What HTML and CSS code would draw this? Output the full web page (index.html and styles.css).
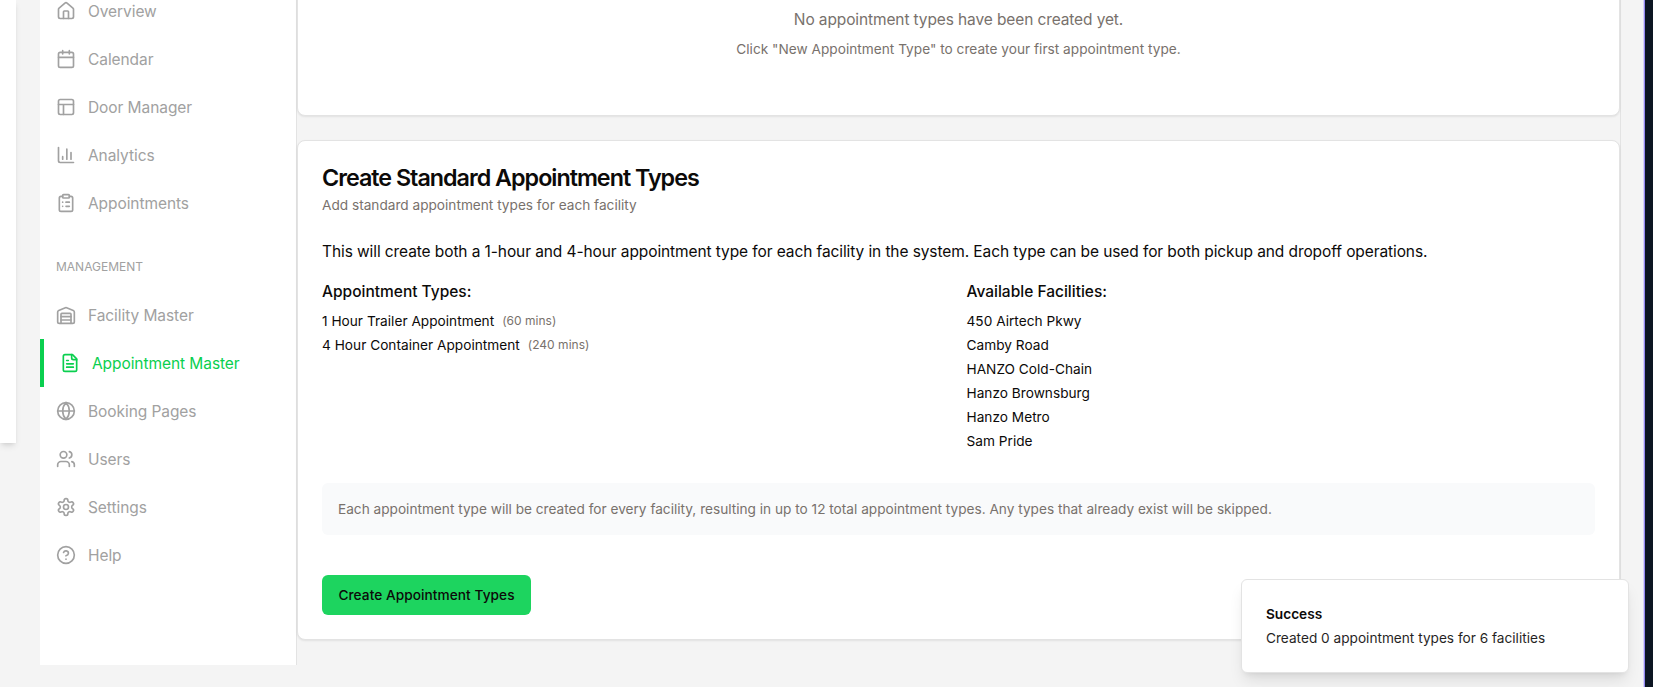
FILE: index.html
```html
<!DOCTYPE html>
<html lang="en">
<head>
<meta charset="utf-8">
<title>Appointment Master</title>
<link rel="stylesheet" href="styles.css">
</head>
<body>
<div class="app">
  <div class="edge-panel"></div>
  <div class="shell">
    <nav class="sidebar">
      <a class="item"><svg class="icon" viewBox="0 0 24 24"><path d="M15 21v-8a1 1 0 0 0-1-1h-4a1 1 0 0 0-1 1v8"/><path d="M3 10a2 2 0 0 1 .709-1.528l7-5.999a2 2 0 0 1 2.582 0l7 5.999A2 2 0 0 1 21 10v9a2 2 0 0 1-2 2H5a2 2 0 0 1-2-2z"/></svg><span>Overview</span></a>
      <a class="item"><svg class="icon" viewBox="0 0 24 24"><path d="M8 2v4M16 2v4M3 10h18"/><rect width="18" height="18" x="3" y="4" rx="2"/></svg><span>Calendar</span></a>
      <a class="item"><svg class="icon" viewBox="0 0 24 24"><rect width="18" height="18" x="3" y="3" rx="2"/><path d="M3 9h18M9 21V9"/></svg><span>Door Manager</span></a>
      <a class="item"><svg class="icon" viewBox="0 0 24 24"><path d="M3 3v16a2 2 0 0 0 2 2h16M18 17V9M13 17V5M8 17v-3"/></svg><span>Analytics</span></a>
      <a class="item"><svg class="icon" viewBox="0 0 24 24"><rect width="8" height="4" x="8" y="2" rx="1"/><path d="M16 4h2a2 2 0 0 1 2 2v14a2 2 0 0 1-2 2H6a2 2 0 0 1-2-2V6a2 2 0 0 1 2-2h2M12 11h4M12 16h4M8 11h.01M8 16h.01"/></svg><span>Appointments</span></a>
      <div class="group-label"><span>MANAGEMENT</span></div>
      <a class="item"><svg class="icon" viewBox="0 0 24 24"><path d="M22 8.35V20a2 2 0 0 1-2 2H4a2 2 0 0 1-2-2V8.35A2 2 0 0 1 3.26 6.5l8-3.2a2 2 0 0 1 1.48 0l8 3.2A2 2 0 0 1 22 8.35ZM6 18h12M6 14h12"/><path d="M6 22V11a1 1 0 0 1 1-1h10a1 1 0 0 1 1 1v11"/></svg><span>Facility Master</span></a>
      <a class="item active"><svg class="icon" viewBox="0 0 24 24"><path d="M15 2H6a2 2 0 0 0-2 2v16a2 2 0 0 0 2 2h12a2 2 0 0 0 2-2V7Z"/><path d="M14 2v4a2 2 0 0 0 2 2h4M10 9H8M16 13H8M16 17H8"/></svg><span>Appointment Master</span></a>
      <a class="item"><svg class="icon" viewBox="0 0 24 24"><circle cx="12" cy="12" r="10"/><path d="M12 2a14.5 14.5 0 0 0 0 20 14.5 14.5 0 0 0 0-20M2 12h20"/></svg><span>Booking Pages</span></a>
      <a class="item"><svg class="icon" viewBox="0 0 24 24"><path d="M16 21v-2a4 4 0 0 0-4-4H6a4 4 0 0 0-4 4v2"/><circle cx="9" cy="7" r="4"/><path d="M22 21v-2a4 4 0 0 0-3-3.87M16 3.13a4 4 0 0 1 0 7.75"/></svg><span>Users</span></a>
      <a class="item"><svg class="icon" viewBox="0 0 24 24"><path d="M12.22 2h-.44a2 2 0 0 0-2 2v.18a2 2 0 0 1-1 1.73l-.43.25a2 2 0 0 1-2 0l-.15-.08a2 2 0 0 0-2.73.73l-.22.38a2 2 0 0 0 .73 2.73l.15.1a2 2 0 0 1 1 1.72v.51a2 2 0 0 1-1 1.74l-.15.09a2 2 0 0 0-.73 2.73l.22.38a2 2 0 0 0 2.73.73l.15-.08a2 2 0 0 1 2 0l.43.25a2 2 0 0 1 1 1.73V20a2 2 0 0 0 2 2h.44a2 2 0 0 0 2-2v-.18a2 2 0 0 1 1-1.73l.43-.25a2 2 0 0 1 2 0l.15.08a2 2 0 0 0 2.73-.73l.22-.39a2 2 0 0 0-.73-2.73l-.15-.08a2 2 0 0 1-1-1.74v-.5a2 2 0 0 1 1-1.74l.15-.09a2 2 0 0 0 .73-2.73l-.22-.38a2 2 0 0 0-2.73-.73l-.15.08a2 2 0 0 1-2 0l-.43-.25a2 2 0 0 1-1-1.73V4a2 2 0 0 0-2-2z"/><circle cx="12" cy="12" r="3"/></svg><span>Settings</span></a>
      <a class="item"><svg class="icon" viewBox="0 0 24 24"><circle cx="12" cy="12" r="10"/><path d="M9.09 9a3 3 0 0 1 5.83 1c0 2-3 3-3 3M12 17h.01"/></svg><span>Help</span></a>
    </nav>
    <main class="main">
      <section class="card empty-card">
        <p class="empty-title"><span>No appointment types have been created yet.</span></p>
        <p class="empty-hint"><span>Click "New Appointment Type" to create your first appointment type.</span></p>
      </section>
      <section class="card">
        <h2 class="title"><span>Create Standard Appointment Types</span></h2>
        <p class="subtitle"><span>Add standard appointment types for each facility</span></p>
        <p class="intro"><span>This will create both a 1-hour and 4-hour appointment type for each facility in the system. Each type can be used for both pickup and dropoff operations.</span></p>
        <div class="columns">
          <div>
            <h3 class="heading"><span>Appointment Types:</span></h3>
            <ul class="list">
              <li><span>1 Hour Trailer Appointment</span><span class="mins">(60 mins)</span></li>
              <li><span>4 Hour Container Appointment</span><span class="mins">(240 mins)</span></li>
            </ul>
          </div>
          <div>
            <h3 class="heading"><span>Available Facilities:</span></h3>
            <ul class="list">
              <li><span>450 Airtech Pkwy</span></li>
              <li><span>Camby Road</span></li>
              <li><span>HANZO Cold-Chain</span></li>
              <li><span>Hanzo Brownsburg</span></li>
              <li><span>Hanzo Metro</span></li>
              <li><span>Sam Pride</span></li>
            </ul>
          </div>
        </div>
        <div class="note"><span>Each appointment type will be created for every facility, resulting in up to 12 total appointment types. Any types that already exist will be skipped.</span></div>
        <button class="button"><span>Create Appointment Types</span></button>
      </section>
    </main>
  </div>
  <div class="right-strip"></div>
</div>
<div class="toast">
  <div class="toast-title"><span>Success</span></div>
  <div class="toast-text"><span>Created 0 appointment types for 6 facilities</span></div>
</div>
</body>
</html>
```

FILE: styles.css
```css
* { box-sizing: border-box; margin: 0; padding: 0; }
body {
  height: 687px;
  overflow: hidden;
  background: #f4f4f4;
  color: #0c0a09;
  font-family: Inter, "Liberation Sans", sans-serif;
  font-size: 15.5px;
  line-height: 24px;
}
.app { display: flex; height: 687px; overflow: hidden; }
.edge-panel {
  width: 16px;
  height: 443px;
  background: #fff;
  box-shadow: 0 4px 6px -1px rgba(0, 0, 0, .1), 0 2px 4px -2px rgba(0, 0, 0, .1);
}
.shell {
  display: flex;
  width: 1581px;
  height: 665px;
  margin-left: 24px;
  border-right: 1px solid #e3e3e3;
}
.sidebar {
  display: flex;
  flex-direction: column;
  width: 256px;
  margin-top: -13px;
  background: #fff;
}
.item {
  display: flex;
  flex: none;
  align-items: center;
  gap: 12px;
  height: 48px;
  padding: 0 16px;
  color: #a1a1a1;
  letter-spacing: -.07px;
}
.item span { padding-top: 2px; }
.item.active { border-left: 4px solid #0acf4f; color: #0acf4f; }
.icon {
  width: 20px;
  height: 20px;
  fill: none;
  stroke: currentColor;
  stroke-width: 2;
  stroke-linecap: round;
  stroke-linejoin: round;
}
.group-label {
  height: 64px;
  padding: 32px 16px 0;
  color: #a1a1a1;
  font-size: 12px;
  line-height: 16px;
}
.main { width: 1324px; border-left: 1px solid #e3e3e3; }
.card {
  height: 500px;
  padding: 24px;
  background: #fff;
  border: 1px solid #e3e3e3;
  border-radius: 8px;
  box-shadow: 0 1px 2px rgba(0, 0, 0, .08);
}
.empty-card {
  height: 146px;
  margin-top: -30px;
  margin-bottom: 24px;
  padding-top: 37px;
  text-align: center;
  color: #78716c;
}
.empty-title { letter-spacing: -.115px; }
.empty-hint { margin-top: 7px; font-size: 13.65px; line-height: 20px; letter-spacing: .02px; }
.title { padding-top: 1px; font-size: 23.3px; line-height: 24px; font-weight: 600; letter-spacing: -1px; }
.subtitle { margin-top: 5px; font-size: 13.65px; line-height: 20px; color: #78716c; }
.intro { margin-top: 25px; letter-spacing: -.095px; }
.columns { display: grid; grid-template-columns: 1fr 1fr; gap: 16px; margin-top: 16px; }
.heading { font-size: 15.5px; font-weight: 500; margin-bottom: 7px; }
.list { display: flex; flex-direction: column; gap: 4px; list-style: none; font-size: 13.65px; line-height: 20px; letter-spacing: .02px; }
.list li { display: flex; gap: 8px; }
.mins { font-size: 12px; color: #78716c; }
.note {
  margin-top: 32px;
  padding: 16px;
  border-radius: 6px;
  background: #f9fafb;
  color: #78716c;
  font-size: 13.65px;
  line-height: 20px;
}
.button {
  display: block;
  width: 209px;
  height: 40px;
  margin-top: 40px;
  border: 0;
  border-radius: 6px;
  background: #1dd45f;
  color: #0c0a09;
  font: 500 13.65px/20px Inter, "Liberation Sans", sans-serif;
  letter-spacing: .07px;
}
.right-strip {
  width: 9px;
  margin-left: auto;
  border-left: 1px solid #9287f0;
  background: #0c1522;
  box-shadow: -1px 0 #d6d1f7;
}
.toast {
  position: absolute;
  left: 1241px;
  top: 579px;
  width: 388px;
  height: 94px;
  padding: 24px;
  background: #fff;
  border: 1px solid #e3e3e3;
  border-radius: 6px;
  box-shadow: 0 10px 15px -3px rgba(0, 0, 0, .1), 0 4px 6px -4px rgba(0, 0, 0, .1);
  font-size: 13.65px;
  line-height: 20px;
}
.toast-title { font-weight: 600; }
.toast-text { margin-top: 4px; opacity: .9; }
```
